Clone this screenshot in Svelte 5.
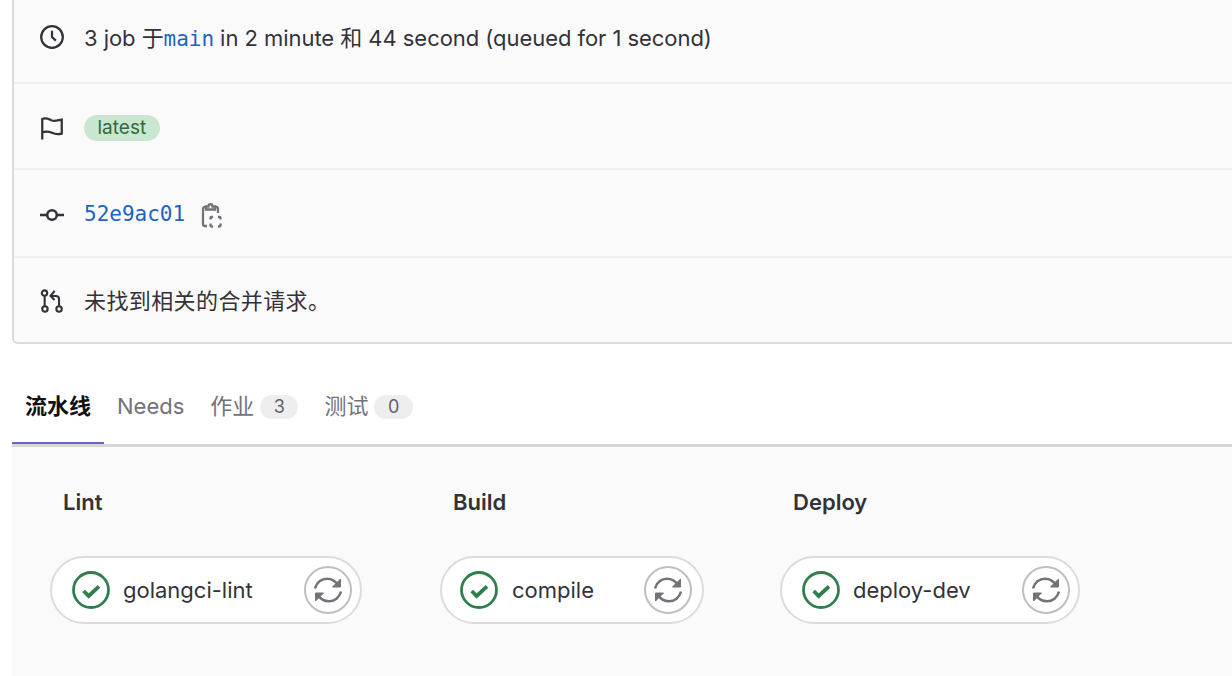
<script>
  const tabs = [
    { label: '流水线', active: true },
    { label: 'Needs' },
    { label: '作业', count: 3 },
    { label: '测试', count: 0 }
  ];

  const stages = [
    { title: 'Lint', job: 'golangci-lint', width: 312, gap: 78 },
    { title: 'Build', job: 'compile', width: 264, gap: 76, tight: true },
    { title: 'Deploy', job: 'deploy-dev', width: 300, gap: 0 }
  ];
</script>

<div class="page">
  <section class="info">
    <div class="row first">
      <svg class="icon" viewBox="0 0 16 16" fill="none" stroke="#333238" stroke-width="1.5">
        <circle cx="8" cy="8" r="7.2" />
        <path d="M8 3.8V8l2.6 2.4" />
      </svg>
      <span class="summary">3 job 于<a class="mono" href="#main">main</a> in 2 minute 和 44 second (queued for 1 second)</span>
    </div>
    <div class="row second">
      <svg class="icon" viewBox="0 0 16 16" fill="none" stroke="#333238" stroke-width="1.5">
        <path d="M1.5 15.700V2C4 .8 6 2.200 8 3c2 .6 4-.2 6.500-.6v9.400c-2.500.6-4.500.4-6.500-.6-2-.8-4-1.200-6.500-.2" />
      </svg>
      <span class="badge">latest</span>
    </div>
    <div class="row third">
      <svg class="icon commit" viewBox="0 0 16 16" fill="none" stroke="#333238" stroke-width="1.700">
        <circle cx="8" cy="8" r="3.200" />
        <path d="M0 8h4.800M11.200 8H16" />
      </svg>
      <a class="mono" href="#sha">52e9ac01</a>
      <svg class="copy" viewBox="0 0 24 26" fill="none" stroke="#737278" stroke-width="2.300">
        <path d="M6 5H5a2 2 0 0 0-2 2v15a2 2 0 0 0 2 2h2" />
        <path d="M6 7.500v-3h2.500c0-3 4-3 4 0H15v3z" />
        <path d="M15 5h1a2 2 0 0 1 2 2v4" />
        <path d="M10.500 17.500V16a1 1 0 0 1 1-1H13M18 15h1.500a1 1 0 0 1 1 1v1.500M10.500 21.500v2a1 1 0 0 0 1 1H13M18 24.500h1.500a1 1 0 0 0 1-1v-2" />
      </svg>
    </div>
    <div class="row fourth">
      <svg class="icon" viewBox="0 0 16 16" fill="none" stroke="#333238" stroke-width="1.400">
        <circle cx="3" cy="3.400" r="1.800" />
        <circle cx="3.300" cy="14" r="1.800" />
        <circle cx="12.700" cy="14" r="1.800" />
        <path d="M3.100 5.200v7M12.700 12V7.500c0-1.300-.9-2.200-2.200-2.200h-3" />
        <path d="M9.700 2 7 5.300 9.700 8" />
      </svg>
      <span class="note">未找到相关的合并请求。</span>
    </div>
  </section>

  <nav class="tabs">
    {#each tabs as tab}
      <div class="tab" class:active={tab.active}>
        {tab.label}
        {#if tab.count !== undefined}
          <span class="count">{tab.count}</span>
        {/if}
      </div>
    {/each}
  </nav>

  <section class="graph">
    {#each stages as stage}
      <div class="stage" style="width: {stage.width}px; margin-right: {stage.gap}px;">
        <h3>{stage.title}</h3>
        <div class="job" class:tight={stage.tight}>
          <svg class="status" viewBox="0 0 38 38" fill="none">
            <circle cx="19" cy="19" r="17.500" stroke="#2f7f4e" stroke-width="2.800" />
            <path d="M11.700 20l5 5 10.300-9.700" stroke="#2f7f4e" stroke-width="3.800" />
          </svg>
          <span class="name">{stage.job}</span>
          <span class="retry">
            <svg viewBox="0 0 28 28" fill="none" stroke="#737278" stroke-width="2.500">
              <path d="M1 12.500C2.500 6.500 7.500 2.700 13 2.700c5 0 8.500 2.300 11 6.300" />
              <path d="M27 15.500c-1.500 6-6.500 9.800-12 9.800-5 0-8.500-2.300-11-6.300" />
              <path d="M26.500 3v8h-8z" fill="#737278" stroke-width="1" />
              <path d="M1.500 25v-8h8z" fill="#737278" stroke-width="1" />
            </svg>
          </span>
        </div>
      </div>
    {/each}
  </section>
</div>

<style>
  :global(body) {
    margin: 0;
    background: #fff;
  }

  .page {
    height: 676px;
    overflow: hidden;
    padding-left: 12px;
    font-family: Inter, "Noto Sans CJK SC", sans-serif;
    font-size: 22px;
    color: #333238;
  }

  .info {
    background: #fbfafb;
    border-left: 2px solid #dcdcde;
    border-bottom: 2px solid #dcdcde;
    border-bottom-left-radius: 6px;
  }

  .row {
    display: flex;
    align-items: center;
    padding-left: 26px;
    border-bottom: 2px solid #f0f0f0;
    box-sizing: border-box;
  }

  .row.first { height: 84px; padding-bottom: 8px; }
  .row.second { height: 86px; padding-top: 3px; }
  .row.third { height: 88px; padding-top: 1px; }
  .row.fourth { height: 84px; border-bottom: 0; }

  .summary {
    margin-top: -2px;
    letter-spacing: -0.05px;
  }

  .note {
    margin-top: -2px;
    letter-spacing: 0.4px;
  }

  .icon {
    width: 24px;
    height: 24px;
    flex: none;
    margin-right: 20px;
    overflow: visible;
  }

  .commit {
    margin-top: 3px;
  }

  .copy {
    width: 24px;
    height: 26px;
    margin-left: 15px;
    margin-top: 3px;
  }

  a {
    color: #1f63c1;
    text-decoration: none;
  }

  .mono {
    font-family: "DejaVu Sans Mono", monospace;
    font-size: 21px;
  }

  .badge {
    background: #c9e6d0;
    color: #2f6a40;
    border-radius: 13px;
    padding: 0 13.5px;
    height: 26px;
    line-height: 25px;
    font-size: 19px;
  }

  .tabs {
    display: flex;
    height: 103px;
    box-sizing: border-box;
    padding-top: 41px;
    border-bottom: 3px solid #d6d6d6;
    font-size: 22px;
    color: #737278;
  }

  .tab {
    display: flex;
    align-items: flex-start;
    height: 58px;
    padding: 0 13px;
    line-height: 42px;
    gap: 6px;
    white-space: nowrap;
  }

  .tab.active {
    color: #111;
    font-weight: 600;
    box-shadow: inset 0 -2px 0 #6666c4;
    height: 59px;
  }

  .count {
    background: #eeeeef;
    border-radius: 12px;
    height: 24px;
    line-height: 24px;
    margin-top: 10px;
    padding: 0 13.5px;
    font-size: 18px;
    color: #626168;
  }

  .graph {
    display: flex;
    height: 231px;
    background: #fafafa;
    padding: 39px 0 0 38px;
    box-sizing: border-box;
  }

  .stage {
    flex: none;
  }

  h3 {
    margin: 0 0 38px 13px;
    font-size: 22px;
    font-weight: 600;
    line-height: 32px;
    color: #333238;
  }

  .job {
    display: flex;
    align-items: center;
    height: 68px;
    box-sizing: border-box;
    background: #fff;
    border: 2px solid #dcdcde;
    border-radius: 34px;
    padding: 0 8px 0 20px;
  }

  .job.tight {
    padding: 0 10px 0 18px;
  }

  .status {
    width: 38px;
    height: 38px;
    flex: none;
    margin-right: 13px;
  }

  .tight .status {
    margin-right: 14px;
  }

  .name {
    flex: 1;
    font-size: 22px;
    white-space: nowrap;
  }

  .retry {
    display: flex;
    align-items: center;
    justify-content: center;
    width: 48px;
    height: 48px;
    box-sizing: border-box;
    border: 2px solid #bfbfc3;
    border-radius: 50%;
    background: #fff;
  }

  .retry svg {
    width: 28px;
    height: 28px;
  }
</style>
